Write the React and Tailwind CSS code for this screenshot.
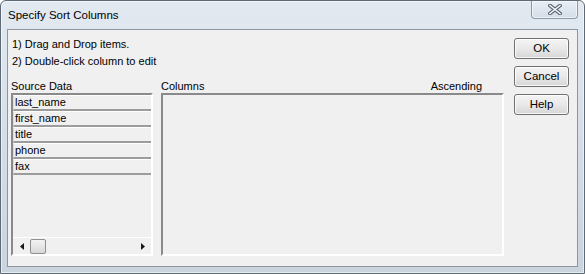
import React from "react";

const font = { fontFamily: '"Liberation Sans", Arial, sans-serif' };

function Btn({ children }) {
  return (
    <div className="w-[55px] h-[21px] rounded-[3px] border border-[#707070] bg-gradient-to-b from-[#f4f4f4] via-[#e9e9e9] to-[#d6d6d6] flex items-center justify-center text-[11.5px] text-black leading-none shadow-[inset_0_0_0_1px_rgba(255,255,255,0.8)]">
      {children}
    </div>
  );
}

export default function App() {
  const rows = ["last_name", "first_name", "title", "phone", "fax"];
  return (
    <div className="w-[585px] h-[274px] bg-white" style={font}>
      <div className="w-full h-full rounded-t-[6px] border border-[#5e6a75] bg-gradient-to-b from-[#e2e9f1] via-[#d5dee8] to-[#c9d4df] shadow-[inset_0_0_0_1px_rgba(255,255,255,0.55)] flex flex-col">
        <div className="h-[28px] flex justify-between items-start shrink-0">
          <span className="pl-[7px] leading-[29px] text-[11.5px] text-black">Specify Sort Columns</span>
          <div className="mr-[6px] w-[47px] h-[18px] rounded-b-[4px] border border-t-0 border-[#8a98a8] bg-gradient-to-b from-[#e8eef5] to-[#d4dde7] shadow-[inset_0_0_0_1px_rgba(255,255,255,0.6)] flex items-center justify-center">
            <svg width="14" height="11" viewBox="0 0 14 11">
              <path d="M2 1.5 L12 9.5 M12 1.5 L2 9.5" stroke="#5a6470" strokeWidth="3.6" strokeLinecap="square" />
              <path d="M2 1.5 L12 9.5 M12 1.5 L2 9.5" stroke="#f4f6f8" strokeWidth="1.6" strokeLinecap="square" />
            </svg>
          </div>
        </div>
        <div className="flex-1 mx-[6px] mb-[6px] border border-[#8d96a0] bg-[#f0f0f0] flex">
          <div className="flex-1 flex flex-col pl-[3px] pt-[6px]">
            <div className="pl-[1px] text-[11px] leading-[17px] text-black">
              <div>1) Drag and Drop items.</div>
              <div>2) Double-click column to edit</div>
            </div>
            <div className="mt-[9px] flex gap-[8px]">
              <div className="w-[142px] flex flex-col">
                <div className="h-[14px] leading-[14px] text-[11px] text-black">Source Data</div>
                <div className="h-[163px] border-2 border-t-[#8a8a8a] border-l-[#8a8a8a] border-r-white border-b-white bg-[#f0f0f0] flex flex-col">
                  {rows.map((r) => (
                    <div
                      key={r}
                      className="h-[16px] border-t border-t-white border-l border-l-[#dcdcdc] border-b-2 border-b-[#9c9c9c] text-[11px] leading-[13px] pl-[1px] text-black"
                    >
                      {r}
                    </div>
                  ))}
                  <div className="flex-1" />
                  <div className="h-[17px] border-t border-t-white flex items-center">
                    <div className="w-[17px] flex items-center justify-center">
                      <svg width="4" height="7" viewBox="0 0 4 7"><path d="M4 0 L0 3.5 L4 7 Z" fill="#1a1a1a" /></svg>
                    </div>
                    <div className="w-[16px] h-[15px] rounded-[2px] border border-[#8e8f8f] bg-gradient-to-b from-[#f3f3f3] to-[#d8d8d8]" />
                    <div className="flex-1" />
                    <div className="w-[17px] flex items-center justify-center">
                      <svg width="4" height="7" viewBox="0 0 4 7"><path d="M0 0 L4 3.5 L0 7 Z" fill="#1a1a1a" /></svg>
                    </div>
                  </div>
                </div>
              </div>
              <div className="w-[343px] flex flex-col">
                <div className="h-[14px] leading-[14px] text-[11px] text-black flex justify-between pr-[22px]">
                  <span>Columns</span>
                  <span>Ascending</span>
                </div>
                <div className="h-[163px] border-2 border-t-[#8a8a8a] border-l-[#8a8a8a] border-r-white border-b-white bg-[#f0f0f0]" />
              </div>
            </div>
          </div>
          <div className="w-[63px] pt-[8px] flex flex-col gap-[7px] pr-[8px]">
            <Btn>OK</Btn>
            <Btn>Cancel</Btn>
            <Btn>Help</Btn>
          </div>
        </div>
      </div>
    </div>
  );
}
